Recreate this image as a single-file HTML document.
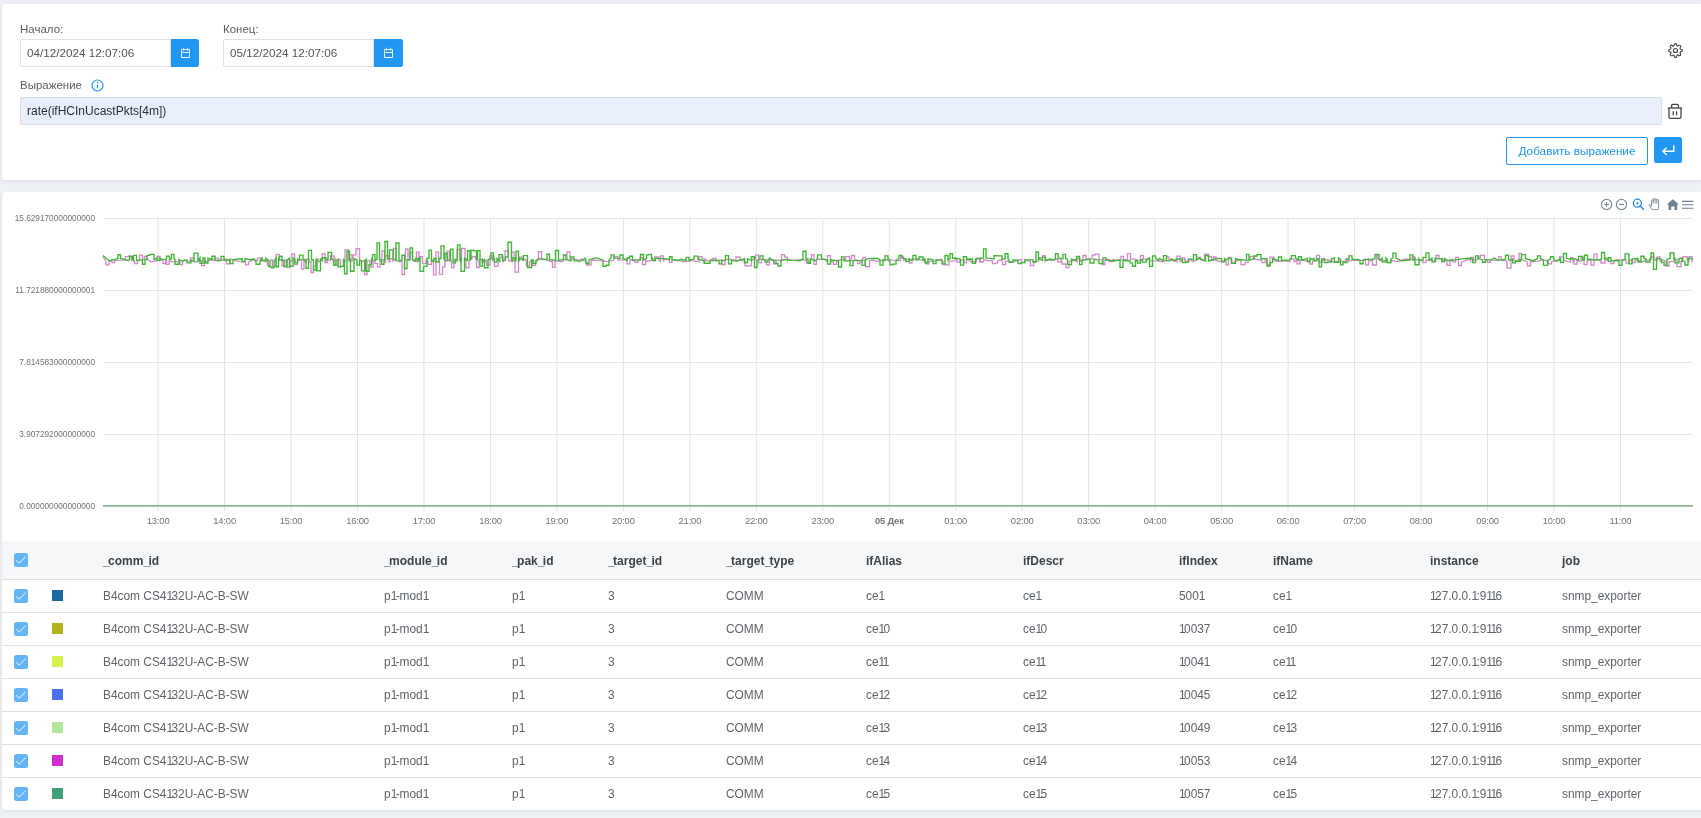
<!DOCTYPE html>
<html><head><meta charset="utf-8">
<style>
*{margin:0;padding:0;box-sizing:border-box}
html,body{width:1701px;height:818px;overflow:hidden;background:#edf0f4;font-family:"Liberation Sans",sans-serif}
.card{position:absolute;background:#fff;border-radius:3px;box-shadow:0 1px 3px rgba(40,50,70,0.10)}
.abs{position:absolute}
.lbl{position:absolute;font-size:11.5px;color:#5a6066;line-height:13px;white-space:nowrap}
.inp{position:absolute;height:28px;border:1px solid #dfe3e8;border-radius:2px 0 0 2px;background:#fff;font-size:11.7px;color:#50565c;line-height:26px;padding-left:6px;white-space:nowrap}
.cbtn{position:absolute;height:28px;width:28px;background:#2196f3;border-radius:0 2.5px 2.5px 0}
.thead{position:absolute;left:2px;top:541px;width:1699px;height:38px;background:#f6f7f9}
.rowline{position:absolute;left:2px;width:1699px;height:1px;background:#dde1e6}
.chk{position:absolute;left:14px;width:14px;height:14px;line-height:0}
.sq{position:absolute;left:52px;width:11px;height:11px}
.th{position:absolute;height:38px;line-height:40px;font-size:12px;font-weight:bold;color:#3d4349;white-space:nowrap}
.us{letter-spacing:-1.6px}
.one{letter-spacing:-1.6px}
.td{position:absolute;height:32px;line-height:32px;font-size:11.9px;color:#5e646a;white-space:nowrap}
</style></head><body>
<div style="position:absolute;left:0;top:0;width:1701px;height:818px;will-change:transform">
<div class="card" style="left:2px;top:4px;width:1699px;height:176px;border-radius:3px 0 0 3px"></div>
<div class="lbl" style="left:20px;top:23px">Начало:</div>
<div class="inp" style="left:20px;top:39px;width:151px">04/12/2024 12:07:06</div>
<div class="cbtn" style="left:171px;top:39px"><svg width="11" height="12" viewBox="0 0 11 12" style="position:absolute;left:9px;top:8px" fill="none" stroke="#fff" stroke-width="0.9"><path d="M1.5 2.5h8v8h-8z"/><path d="M1.5 5.5h8"/><path d="M3.5 0.8v3M7.5 0.8v3"/></svg></div>
<div class="lbl" style="left:223px;top:23px">Конец:</div>
<div class="inp" style="left:223px;top:39px;width:151px">05/12/2024 12:07:06</div>
<div class="cbtn" style="left:374px;top:39px;width:29px"><svg width="11" height="12" viewBox="0 0 11 12" style="position:absolute;left:9px;top:8px" fill="none" stroke="#fff" stroke-width="0.9"><path d="M1.5 2.5h8v8h-8z"/><path d="M1.5 5.5h8"/><path d="M3.5 0.8v3M7.5 0.8v3"/></svg></div>
<div class="abs" style="left:1667.9px;top:42.9px;line-height:0"><svg width="15" height="15" viewBox="0 0 24 24" fill="none" stroke="#3f454b" stroke-width="1.9" stroke-linejoin="round"><circle cx="12" cy="12" r="3.2"/><path d="M19.4 15a1.65 1.65 0 0 0 .33 1.82l.06.06a2 2 0 1 1-2.83 2.83l-.06-.06a1.65 1.65 0 0 0-1.82-.33 1.65 1.65 0 0 0-1 1.51V21a2 2 0 1 1-4 0v-.09A1.65 1.65 0 0 0 9 19.400a1.65 1.65 0 0 0-1.82.33l-.06.06a2 2 0 1 1-2.83-2.830l.06-.06A1.65 1.650 0 0 0 4.68 15a1.65 1.65 0 0 0-1.51-1H3a2 2 0 1 1 0-4h.09A1.65 1.65 0 0 0 4.6 9a1.65 1.65 0 0 0-.33-1.82l-.06-.06a2 2 0 1 1 2.83-2.83l.06.06A1.65 1.65 0 0 0 9 4.68a1.65 1.65 0 0 0 1-1.51V3a2 2 0 1 1 4 0v.09a1.65 1.65 0 0 0 1 1.51 1.65 1.65 0 0 0 1.82-.33l.06-.06a2 2 0 1 1 2.83 2.83l-.06.06A1.65 1.65 0 0 0 19.4 9a1.65 1.65 0 0 0 1.51 1H21a2 2 0 1 1 0 4h-.09a1.65 1.65 0 0 0-1.51 1z"/></svg></div>
<div class="lbl" style="left:20px;top:79px">Выражение</div>
<div class="abs" style="left:91px;top:78.5px;line-height:0"><svg width="13" height="13" viewBox="0 0 13 13"><circle cx="6.5" cy="6.5" r="5.5" fill="none" stroke="#2196f3" stroke-width="1.2"/><circle cx="6.5" cy="3.6" r="0.75" fill="#2196f3"/><path d="M6.5 5.6v3.3" stroke="#2196f3" stroke-width="1.2"/></svg></div>
<div class="abs" style="left:20px;top:97px;width:1642px;height:28px;background:#e8effb;border:1px solid #d8dde4;border-radius:2px;font-size:12px;color:#2b2f33;line-height:26px;padding-left:6px">rate(ifHCInUcastPkts[4m])</div>
<div class="abs" style="left:1667px;top:102.8px;line-height:0"><svg width="16" height="17" viewBox="0 0 16 17" fill="none" stroke="#3f454b" stroke-width="1.3" stroke-linejoin="round"><path d="M0.8 5h14.4"/><path d="M4.6 5V2.6c0-.8.5-1.3 1.3-1.3h4.2c.8 0 1.3.5 1.3 1.3V5"/><path d="M2 5v9c0 .9.6 1.4 1.4 1.4h9.2c.8 0 1.4-.5 1.4-1.4V5"/><path d="M6.3 8.3v3.9M9.6 8.3v3.9"/></svg></div>
<div class="abs" style="left:1506px;top:137px;width:142px;height:28px;border:1px solid #2196f3;border-radius:2px;color:#2196f3;font-size:11.75px;line-height:26px;text-align:center;white-space:nowrap">Добавить выражение</div>
<div class="abs" style="left:1654px;top:137px;width:28px;height:26px;background:#2196f3;border-radius:2.5px">
<div class="abs" style="left:8px;top:8px;line-height:0"><svg width="14" height="12" viewBox="0 0 14 12" fill="none" stroke="#fff" stroke-width="1.4" stroke-linejoin="miter"><path d="M11.8 0.2v6.1H1"/><path d="M4.7 2.4L0.9 6.2l3.8 3.9"/></svg></div></div>

<div class="card" style="left:2px;top:192px;width:1699px;height:618px;border-radius:4px 0 0 4px"></div>
<svg width="100" height="16" viewBox="0 0 100 16" style="position:absolute;left:1598px;top:197px">
<g fill="none" stroke="#6e8192" stroke-width="1.05">
<circle cx="8.6" cy="7.4" r="5.1"/><path d="M8.6 4.9v5M6.1 7.4h5"/>
<circle cx="23.5" cy="7.4" r="5.1"/><path d="M21 7.4h5"/>
</g>
<g fill="none" stroke="#1e88e5" stroke-width="1.2"><circle cx="39.4" cy="6.2" r="4"/><path d="M42.3 9.1l3.5 3.6" stroke-width="1.4"/><path d="M39.4 4.9v2.6M38.1 6.2h2.6" stroke-width="0.9"/></g>
<g fill="none" stroke="#6e8192" stroke-width="0.9" stroke-linejoin="round"><path d="M54.3 12.6L51.3 8.7c-.5-.7.3-1.3.9-.8L53.6 9.2V3.4c0-.9 1.6-.9 1.6 0V2.3c0-.9 1.8-.9 1.8 0v.2c0-.9 1.8-.9 1.8 0v.6c0-.8 1.8-.8 1.8 0V11.3c0 .8-.5 1.3-1.3 1.3z"/><path d="M55.2 3v3.5M57 2.5v4M58.8 2.8v3.7"/></g>
<path d="M74.8 2.2l6 5.3h-1.6v5.4h-2.7v-3.3h-3.3v3.3h-2.7v-5.4h-1.6z" fill="#6e8192"/>
<g stroke="#6e8192" stroke-width="1.1"><path d="M84 4.4h11.4M84 7.7h11.4M84 11.2h11.4"/></g>
</svg>
<svg width="1701" height="340" viewBox="0 192 1701 340" style="position:absolute;left:0;top:192px">
<line x1="103" y1="218.5" x2="1693" y2="218.5" stroke="#e3e3e3" stroke-width="1"/>
<line x1="103" y1="290.5" x2="1693" y2="290.5" stroke="#e3e3e3" stroke-width="1"/>
<line x1="103" y1="362.5" x2="1693" y2="362.5" stroke="#e3e3e3" stroke-width="1"/>
<line x1="103" y1="434.5" x2="1693" y2="434.5" stroke="#e3e3e3" stroke-width="1"/>
<line x1="158.10" y1="218" x2="158.10" y2="511" stroke="#e3e3e3" stroke-width="1"/>
<line x1="224.57" y1="218" x2="224.57" y2="511" stroke="#e3e3e3" stroke-width="1"/>
<line x1="291.04" y1="218" x2="291.04" y2="511" stroke="#e3e3e3" stroke-width="1"/>
<line x1="357.51" y1="218" x2="357.51" y2="511" stroke="#e3e3e3" stroke-width="1"/>
<line x1="423.98" y1="218" x2="423.98" y2="511" stroke="#e3e3e3" stroke-width="1"/>
<line x1="490.45" y1="218" x2="490.45" y2="511" stroke="#e3e3e3" stroke-width="1"/>
<line x1="556.92" y1="218" x2="556.92" y2="511" stroke="#e3e3e3" stroke-width="1"/>
<line x1="623.39" y1="218" x2="623.39" y2="511" stroke="#e3e3e3" stroke-width="1"/>
<line x1="689.86" y1="218" x2="689.86" y2="511" stroke="#e3e3e3" stroke-width="1"/>
<line x1="756.33" y1="218" x2="756.33" y2="511" stroke="#e3e3e3" stroke-width="1"/>
<line x1="822.80" y1="218" x2="822.80" y2="511" stroke="#e3e3e3" stroke-width="1"/>
<line x1="889.27" y1="218" x2="889.27" y2="511" stroke="#e3e3e3" stroke-width="1"/>
<line x1="955.74" y1="218" x2="955.74" y2="511" stroke="#e3e3e3" stroke-width="1"/>
<line x1="1022.21" y1="218" x2="1022.21" y2="511" stroke="#e3e3e3" stroke-width="1"/>
<line x1="1088.68" y1="218" x2="1088.68" y2="511" stroke="#e3e3e3" stroke-width="1"/>
<line x1="1155.15" y1="218" x2="1155.15" y2="511" stroke="#e3e3e3" stroke-width="1"/>
<line x1="1221.62" y1="218" x2="1221.62" y2="511" stroke="#e3e3e3" stroke-width="1"/>
<line x1="1288.09" y1="218" x2="1288.09" y2="511" stroke="#e3e3e3" stroke-width="1"/>
<line x1="1354.56" y1="218" x2="1354.56" y2="511" stroke="#e3e3e3" stroke-width="1"/>
<line x1="1421.03" y1="218" x2="1421.03" y2="511" stroke="#e3e3e3" stroke-width="1"/>
<line x1="1487.50" y1="218" x2="1487.50" y2="511" stroke="#e3e3e3" stroke-width="1"/>
<line x1="1553.97" y1="218" x2="1553.97" y2="511" stroke="#e3e3e3" stroke-width="1"/>
<line x1="1620.44" y1="218" x2="1620.44" y2="511" stroke="#e3e3e3" stroke-width="1"/>
<text x="95" y="221" text-anchor="end" font-family="Liberation Sans" font-size="8.25" fill="#6f757b">15.629170000000000</text>
<text x="95" y="293" text-anchor="end" font-family="Liberation Sans" font-size="8.25" fill="#6f757b">11.721880000000001</text>
<text x="95" y="365" text-anchor="end" font-family="Liberation Sans" font-size="8.25" fill="#6f757b">7.814583000000000</text>
<text x="95" y="437" text-anchor="end" font-family="Liberation Sans" font-size="8.25" fill="#6f757b">3.907292000000000</text>
<text x="95" y="509" text-anchor="end" font-family="Liberation Sans" font-size="8.25" fill="#6f757b">0.000000000000000</text>
<text x="158.1" y="523.5" text-anchor="middle" font-family="Liberation Sans" font-size="9.4" letter-spacing="-0.15" fill="#6f757b">13:00</text>
<text x="224.6" y="523.5" text-anchor="middle" font-family="Liberation Sans" font-size="9.4" letter-spacing="-0.15" fill="#6f757b">14:00</text>
<text x="291.0" y="523.5" text-anchor="middle" font-family="Liberation Sans" font-size="9.4" letter-spacing="-0.15" fill="#6f757b">15:00</text>
<text x="357.5" y="523.5" text-anchor="middle" font-family="Liberation Sans" font-size="9.4" letter-spacing="-0.15" fill="#6f757b">16:00</text>
<text x="424.0" y="523.5" text-anchor="middle" font-family="Liberation Sans" font-size="9.4" letter-spacing="-0.15" fill="#6f757b">17:00</text>
<text x="490.5" y="523.5" text-anchor="middle" font-family="Liberation Sans" font-size="9.4" letter-spacing="-0.15" fill="#6f757b">18:00</text>
<text x="556.9" y="523.5" text-anchor="middle" font-family="Liberation Sans" font-size="9.4" letter-spacing="-0.15" fill="#6f757b">19:00</text>
<text x="623.4" y="523.5" text-anchor="middle" font-family="Liberation Sans" font-size="9.4" letter-spacing="-0.15" fill="#6f757b">20:00</text>
<text x="689.9" y="523.5" text-anchor="middle" font-family="Liberation Sans" font-size="9.4" letter-spacing="-0.15" fill="#6f757b">21:00</text>
<text x="756.3" y="523.5" text-anchor="middle" font-family="Liberation Sans" font-size="9.4" letter-spacing="-0.15" fill="#6f757b">22:00</text>
<text x="822.8" y="523.5" text-anchor="middle" font-family="Liberation Sans" font-size="9.4" letter-spacing="-0.15" fill="#6f757b">23:00</text>
<text x="889.3" y="523.5" text-anchor="middle" font-family="Liberation Sans" font-size="9.4" letter-spacing="-0.15" font-weight="bold" fill="#6f757b">05 Дек</text>
<text x="955.7" y="523.5" text-anchor="middle" font-family="Liberation Sans" font-size="9.4" letter-spacing="-0.15" fill="#6f757b">01:00</text>
<text x="1022.2" y="523.5" text-anchor="middle" font-family="Liberation Sans" font-size="9.4" letter-spacing="-0.15" fill="#6f757b">02:00</text>
<text x="1088.7" y="523.5" text-anchor="middle" font-family="Liberation Sans" font-size="9.4" letter-spacing="-0.15" fill="#6f757b">03:00</text>
<text x="1155.1" y="523.5" text-anchor="middle" font-family="Liberation Sans" font-size="9.4" letter-spacing="-0.15" fill="#6f757b">04:00</text>
<text x="1221.6" y="523.5" text-anchor="middle" font-family="Liberation Sans" font-size="9.4" letter-spacing="-0.15" fill="#6f757b">05:00</text>
<text x="1288.1" y="523.5" text-anchor="middle" font-family="Liberation Sans" font-size="9.4" letter-spacing="-0.15" fill="#6f757b">06:00</text>
<text x="1354.6" y="523.5" text-anchor="middle" font-family="Liberation Sans" font-size="9.4" letter-spacing="-0.15" fill="#6f757b">07:00</text>
<text x="1421.0" y="523.5" text-anchor="middle" font-family="Liberation Sans" font-size="9.4" letter-spacing="-0.15" fill="#6f757b">08:00</text>
<text x="1487.5" y="523.5" text-anchor="middle" font-family="Liberation Sans" font-size="9.4" letter-spacing="-0.15" fill="#6f757b">09:00</text>
<text x="1554.0" y="523.5" text-anchor="middle" font-family="Liberation Sans" font-size="9.4" letter-spacing="-0.15" fill="#6f757b">10:00</text>
<text x="1620.4" y="523.5" text-anchor="middle" font-family="Liberation Sans" font-size="9.4" letter-spacing="-0.15" fill="#6f757b">11:00</text>
<line x1="103" y1="505.9" x2="1693" y2="505.9" stroke="#8db58d" stroke-width="1.6"/>
<path d="M103.0,256.5L106.0,261.8V264.8H109.0V261.8L112.0,260.3V262.7H114.5V260.3L120.5,260.2L125.5,260.0V256.6H128.5V255.9H131.5V260.0L134.5,261.0V263.7H137.5V261.0L139.5,259.5V255.1H142.5V259.5L144.5,259.2V256.5H147.0V259.2L151.0,261.8L157.0,260.7V256.3H160.0V260.7L163.0,260.0V263.5H165.5V260.0L166.5,260.9V264.3H169.0V260.9L172.0,261.5L180.0,261.9V264.6H182.5V261.9L184.5,259.7L190.5,261.9V257.9H193.5V261.9L201.5,260.7V265.7H204.5V260.7L206.5,261.8L211.5,259.1L214.5,260.6V258.2H218.5V260.6L226.5,259.1V263.9H229.5V259.1L232.5,259.4L236.5,260.7L239.5,261.7L245.5,262.1V264.8H248.5V262.1L253.5,259.6L255.5,261.0L257.5,260.2V257.9H261.5V260.2L264.5,259.7L265.5,261.7L267.5,260.1V265.5H270.5V260.1L272.5,260.0V266.4H276.0V254.3H279.0V260.0L282.0,259.8V265.7H284.5V259.8L287.5,260.4V267.5H290.0V260.4L292.0,261.4V253.9H294.5V264.6H297.5V261.4L300.5,259.4L301.5,259.5V269.0H304.0V259.5L305.0,262.0L306.0,262.1V259.2H309.0V262.1L311.0,261.8V272.5H313.5V266.3H316.0V261.8L318.0,259.2L319.0,262.0L322.0,259.6V253.8H325.0V262.5H327.5V259.6L329.5,260.1L330.5,260.5V255.9H334.0V260.5L335.0,259.0V265.1H338.5V259.0L340.5,259.7V266.4H344.0V259.7L345.0,260.6V249.8H348.5V260.6L349.5,261.0V254.8H352.0V261.0L353.0,260.2V254.8H356.0V248.7H359.5V260.2L362.5,261.3L364.5,260.4V274.5H367.0V260.4L370.0,260.8V267.2H373.0V260.8L375.0,260.5V263.3H377.5V267.2H380.0V260.5L381.0,261.1L382.0,261.1V250.9H384.5V261.1L385.5,262.0V255.8H389.0V262.0L390.0,261.7V258.6H392.5V261.7L393.5,259.5V248.3H396.0V259.5L399.0,261.5L402.0,261.3V274.7H404.5V261.3L405.5,260.0V249.0H408.0V260.0L410.0,259.9V252.5H412.5V259.9L414.5,261.5L415.5,259.4L416.5,260.9V252.2H419.0V260.9L420.0,259.8V256.6H422.5V263.7H426.0V259.8L428.0,261.4V264.4H431.5V261.4L433.5,259.6V274.8H436.0V251.9H438.5V259.6L439.5,260.7V274.3H442.5V266.9H445.0V260.7L447.0,261.2V251.1H449.5V261.2L451.5,260.6V267.7H454.0V260.6L455.0,259.0L457.0,261.1V249.4H460.5V261.1L461.5,260.2V248.4H465.0V260.2L466.0,260.8V267.8H469.0V260.8L472.0,259.2V256.6H475.5V259.2L476.5,259.8V267.5H479.0V259.8L482.0,259.2V261.9H484.5V259.2L485.5,261.1L486.5,260.5V265.2H490.0V255.6H492.5V260.5L494.5,261.8V266.3H498.0V261.8L500.0,261.7V257.1H503.0V261.7L505.0,260.7V251.0H508.5V260.7L511.5,261.3V252.1H514.0V261.3L515.0,261.5V272.1H518.5V261.5L519.5,260.6V257.2H522.5V260.6L525.5,259.3L526.5,261.5V265.8H529.5V261.5L531.5,261.2L532.5,261.7V265.7H535.5V261.7L538.5,259.6V251.6H541.5V259.6L544.5,259.5L552.5,261.8V267.4H555.0V261.8L556.0,260.5L562.0,261.7L565.0,259.8L567.0,258.9V251.9H570.0V258.9L578.0,259.8L579.0,261.7L581.0,258.9L587.0,261.6V265.1H591.0V261.6L592.0,260.0L600.0,260.7L608.0,261.6L614.0,260.1V256.6H618.0V260.1L621.0,259.8L626.0,259.7L627.0,259.1V263.8H630.0V259.1L633.0,260.8L635.0,259.6V262.4H638.0V259.6L640.0,260.1V257.7H642.5V264.7H645.5V260.1L646.5,261.2L654.5,259.7V256.9H658.5V259.7L660.5,261.5V255.9H663.5V261.5L664.5,259.0L669.5,259.6V262.3H672.0V259.6L680.0,260.8L683.0,261.5L689.0,261.3L691.0,260.4L699.0,261.8V256.7H702.0V258.9H705.0V261.8L706.0,260.0L709.0,261.7L712.0,259.2L713.0,261.4V258.4H716.0V261.4L719.0,259.9L722.0,260.1V264.5H725.0V260.1L728.0,259.2L731.0,259.5L736.0,260.6V257.0H740.0V260.6L745.0,260.8V265.8H747.5V265.9H751.5V260.8L753.5,258.9L755.5,259.0V254.8H758.5V262.8H761.5V259.0L766.5,259.7V264.8H769.5V259.7L773.5,260.1V263.9H776.5V260.1L781.5,260.9V254.7H784.5V257.2H787.5V260.9L788.5,259.4L791.5,260.1L794.5,260.4L800.5,259.7L806.5,260.4V262.8H809.5V260.4L811.5,259.2V254.7H814.0V264.3H816.5V259.2L824.5,259.3L827.5,261.9V255.7H830.5V261.9L833.5,261.6V264.3H836.5V261.6L837.5,260.3L845.5,259.6V256.6H849.5V259.6L851.5,260.5V255.5H854.5V260.5L856.5,260.0L857.5,260.6V263.6H860.0V260.6L863.0,260.5V257.4H865.5V266.6H869.5V260.5L873.5,260.1L876.5,261.5L877.5,261.1L885.5,260.2L887.5,258.9L892.5,260.2L900.5,260.5V257.0H903.5V260.5L909.5,259.2V263.1H912.0V259.2L918.0,258.9L926.0,261.4V263.9H929.0V261.4L932.0,261.1L935.0,261.0L940.0,259.8L941.0,259.1L943.0,261.4V264.6H946.0V264.9H949.0V261.4L954.0,260.8L957.0,259.3V262.1H960.0V259.3L963.0,260.3L964.0,260.0V262.7H966.5V260.0L969.5,259.8L970.5,261.7L976.5,261.3V258.1H979.5V261.3L980.5,259.5V262.0H983.5V259.5L987.5,260.5L992.5,260.8V263.7H995.0V263.2H997.5V260.8L1001.5,259.8L1002.5,261.2V264.6H1005.5V261.2L1013.5,261.9L1021.5,259.4V262.6H1024.5V259.4L1030.5,261.7V265.7H1033.5V261.7L1038.5,261.2V257.6H1042.5V255.6H1045.0V261.2L1046.0,259.8L1049.0,259.4L1050.0,260.6L1058.0,259.1V262.2H1061.0V259.1L1062.0,261.6V264.0H1066.0V267.6H1069.0V261.6L1075.0,260.3L1077.0,261.7V258.6H1080.0V261.7L1083.0,259.2V255.5H1086.0V259.2L1092.0,259.0V255.1H1095.0V254.1H1099.0V259.0L1102.0,259.9V264.5H1105.0V259.9L1109.0,259.2V261.6H1113.0V259.2L1116.0,260.6L1121.0,260.0V256.3H1123.5V260.0L1127.5,259.4V253.7H1130.5V259.4L1135.5,258.9L1137.5,260.3L1139.5,260.4L1140.5,259.1V255.6H1143.5V259.1L1146.5,259.8L1148.5,259.2L1150.5,260.8L1158.5,260.8L1162.5,261.7L1166.5,259.7V256.9H1169.0V259.7L1177.0,261.6V256.2H1180.0V261.6L1182.0,261.0V257.9H1184.5V261.0L1185.5,259.0V261.6H1188.5V259.0L1193.5,261.8L1196.5,259.7V257.4H1200.5V259.7L1203.5,260.5L1204.5,260.0V254.1H1208.5V256.5H1211.5V260.0L1213.5,260.4V257.0H1216.0V260.4L1221.0,261.8L1226.0,260.3V264.8H1228.5V257.5H1231.0V260.3L1232.0,260.8V263.4H1235.0V260.8L1241.0,260.0V264.6H1245.0V262.3H1248.0V260.0L1250.0,259.0V256.5H1254.0V259.0L1262.0,260.4V262.7H1265.0V260.4L1267.0,260.7V264.8H1270.0V257.2H1274.0V260.7L1278.0,261.4L1286.0,260.9L1290.0,261.7V259.1H1294.0V261.7L1295.0,261.8L1297.0,259.3V263.8H1300.0V259.3L1304.0,260.5L1310.0,261.3V264.2H1312.5V261.3L1316.5,259.8V255.3H1319.5V262.3H1322.5V259.8L1328.5,260.0L1333.5,261.9L1341.5,261.4L1345.5,261.3V258.9H1348.5V261.3L1354.5,260.1L1362.5,260.3L1365.5,259.1V264.9H1368.5V259.1L1370.5,261.1L1372.5,259.2V265.0H1376.5V254.6H1379.5V259.2L1385.5,260.8L1387.5,260.3V262.7H1390.5V260.3L1398.5,261.7L1404.5,259.2L1412.5,259.5V256.8H1415.0V259.5L1423.0,259.8V262.7H1426.0V259.8L1428.0,260.3L1436.0,261.3V255.5H1439.0V258.6H1442.0V261.3L1443.0,259.5L1447.0,261.6V265.4H1450.0V259.3H1452.5V261.6L1453.5,261.8L1455.5,262.1V257.4H1458.5V265.5H1461.5V262.1L1469.5,259.0L1470.5,260.7V257.4H1473.5V260.7L1477.5,259.6V257.4H1480.5V255.4H1484.5V259.6L1487.5,260.1V262.3H1490.5V260.1L1498.5,260.0V256.6H1501.0V260.0L1502.0,260.5L1505.0,260.4L1507.0,261.0V268.2H1511.0V256.0H1514.0V261.0L1519.0,259.5V253.4H1521.5V259.5L1526.5,261.5L1527.5,261.9V265.9H1530.5V261.9L1538.5,261.1L1540.5,260.4L1541.5,259.6L1546.5,260.6L1548.5,261.6V263.8H1551.5V261.6L1559.5,260.1V256.8H1563.5V260.1L1564.5,260.4L1567.5,261.6L1570.5,261.8V257.7H1573.0V261.8L1574.0,260.6V264.2H1577.0V260.6L1579.0,261.0L1581.0,260.9V257.6H1584.0V264.6H1587.0V260.9L1591.0,259.9V265.1H1594.0V254.2H1597.0V259.9L1598.0,259.8L1600.0,259.9L1601.0,259.5V263.0H1605.0V259.5L1609.0,261.6L1611.0,260.8V263.6H1614.0V260.8L1616.0,259.6L1620.0,259.9L1626.0,260.0V263.1H1629.0V260.0L1632.0,260.3V262.7H1635.0V260.3L1643.0,261.7L1644.0,260.9L1646.0,260.3L1651.0,259.4V257.1H1654.0V259.4L1657.0,261.0V257.0H1660.0V261.0L1664.0,260.3L1666.0,261.9V266.1H1669.0V261.9L1674.0,261.5V259.2H1677.0V266.7H1681.0V261.5L1683.0,259.5V256.7H1687.0V259.5L1689.0,260.9V256.6H1692.0V260.9L1693.0,259.2" fill="none" stroke="#d08ac6" stroke-width="1.3"/>
<path d="M103.0,255.5L109.0,260.7L115.0,259.3L118.0,258.5V254.7H120.5V258.5L128.5,260.5L129.5,259.8V256.6H132.5V259.8L133.5,260.6V255.3H136.5V260.6L142.5,259.8V264.2H145.0V259.8L147.0,259.4V255.3H150.0V254.3H154.0V259.4L157.0,258.0V260.4H159.5V258.0L160.5,258.6L161.5,259.4L166.5,259.2V256.3H169.5V259.2L171.5,258.9V254.4H174.0V258.9L175.0,259.4V264.2H179.0V259.4L182.0,261.1L187.0,260.0V262.9H191.0V260.0L194.0,261.1V253.1H198.0V261.1L200.0,258.0V263.4H203.0V258.0L205.0,258.1V263.0H208.0V258.1L212.0,259.9V256.3H215.0V259.9L218.0,260.8L221.0,260.2V256.4H224.0V260.2L230.0,259.8V263.6H233.0V259.8L236.0,259.2L242.0,258.8V261.4H245.0V258.8L251.0,259.7L253.0,258.8L256.0,260.3V264.2H260.0V260.3L262.0,258.2V260.9H266.0V258.2L269.0,260.9V266.9H271.5V267.9H274.0V260.9L276.0,258.1V266.7H278.5V258.1L279.5,260.4V256.3H282.0V260.4L284.0,260.9V266.7H286.5V260.9L289.5,258.1V266.2H293.0V258.1L295.0,259.1V262.9H297.5V259.1L299.5,259.8V255.1H303.0V259.8L306.0,260.0V268.2H308.5V250.3H311.5V260.0L313.5,259.5V270.1H316.0V259.5L317.0,259.1V270.8H320.5V259.1L322.5,260.6V257.7H326.0V260.6L328.0,258.8V252.4H331.5V258.8L333.5,260.2V265.1H336.0V260.2L338.0,259.7V266.9H340.5V266.3H343.5V259.7L344.5,260.4V273.7H347.0V251.1H349.5V260.4L350.5,258.5V271.2H354.0V258.5L357.0,260.2V265.1H359.5V260.2L361.5,260.6V270.8H365.0V260.6L366.0,259.3V271.2H369.0V264.7H371.5V259.3L372.5,260.2V254.6H375.0V260.2L377.0,259.6V242.8H379.5V259.6L381.5,259.5V264.2H384.0V259.5L385.0,259.3V241.5H387.5V259.3L389.5,258.4V249.9H393.0V258.4L396.0,260.9V243.0H399.0V260.9L402.0,259.9V255.2H404.5V268.5H407.0V259.9L410.0,259.6V247.8H412.5V259.6L415.5,261.0V258.6H418.0V261.0L420.0,258.2V271.4H423.5V266.4H427.0V258.2L429.0,258.3V250.1H431.5V261.4H434.0V258.3L436.0,258.3V262.0H439.0V258.3L441.0,258.7V245.9H444.0V258.7L445.0,260.1V253.5H447.5V260.1L450.5,259.9V249.1H453.0V262.9H455.5V259.9L457.5,259.8V244.9H460.0V259.8L461.0,258.3V271.4H464.5V258.3L467.5,260.4V250.7H470.0V260.4L471.0,258.5V250.1H474.0V250.8H476.5V258.5L477.5,259.4V250.6H480.0V266.1H482.5V259.4L483.5,260.6L484.5,259.8V267.7H488.0V259.8L491.0,259.0V252.9H493.5V259.0L494.5,258.5V262.1H497.0V258.5L499.0,260.8V254.6H502.5V260.8L505.5,259.8V256.8H508.0V242.2H511.5V259.8L512.5,260.8V257.9H515.0V260.8L516.0,260.5V251.1H518.5V260.5L519.5,258.8L521.5,259.0L523.5,259.6V255.6H527.5V267.5H531.5V259.6L533.5,260.3V263.6H536.0V260.3L539.0,258.7L547.0,259.6V254.2H549.5V259.6L555.5,260.5V250.5H558.5V260.5L563.5,259.4V255.0H566.0V259.4L571.0,260.9V256.8H574.0V260.9L582.0,260.9L585.0,258.0L586.0,259.9V263.7H589.0V259.9L594.0,258.1L598.0,258.1L603.0,260.2V266.3H606.0V265.2H609.0V260.2L611.0,258.1V254.9H614.0V258.1L620.0,258.3V255.0H623.0V258.3L627.0,260.4V258.0H629.5V256.3H632.5V260.4L640.5,259.9V254.5H643.5V259.9L646.5,258.5V254.9H649.0V254.3H651.5V258.5L652.5,258.2V260.5H655.5V258.2L663.5,258.7L669.5,259.4V256.7H672.0V259.4L678.0,260.5L681.0,259.3L686.0,260.5V257.4H689.0V260.5L692.0,259.7L694.0,259.3V256.1H698.0V259.3L704.0,260.5V263.2H707.0V263.3H710.0V260.5L716.0,260.2L719.0,260.7V263.8H721.5V260.7L725.5,260.2V255.6H728.5V263.8H731.5V260.2L736.5,261.0L744.5,258.7V262.9H747.5V258.7L751.5,260.5V256.7H754.5V267.5H757.0V260.5L760.0,259.6V255.9H763.0V259.6L765.0,259.8V262.1H768.0V259.8L770.0,258.0L772.0,260.3L775.0,260.2V263.6H778.0V266.0H781.0V260.2L787.0,259.5L789.0,260.2L794.0,260.3L798.0,260.6L800.0,260.7L801.0,259.6L803.0,259.2V251.2H806.0V259.2L808.0,258.9V263.3H810.5V258.9L813.5,260.0L815.5,260.8L816.5,259.8L817.5,258.9V254.8H821.5V258.9L827.5,259.8V264.1H830.5V259.8L838.5,260.9V267.0H841.5V256.9H844.0V260.9L850.0,260.7V265.6H853.0V260.7L861.0,260.4L862.0,260.0V265.4H865.0V260.0L867.0,259.2L869.0,258.7L877.0,258.3L880.0,259.6V265.1H883.0V259.6L885.0,260.5V255.9H888.0V260.5L890.0,261.0V264.9H893.0V264.1H896.0V261.0L899.0,258.0V255.3H902.0V258.0L906.0,258.9V261.6H909.0V258.9L911.0,260.0L913.0,260.0V255.4H916.0V260.0L919.0,259.7V257.0H923.0V259.7L925.0,258.8V262.7H928.0V258.8L933.0,259.7V263.6H936.0V259.7L942.0,260.2V263.8H945.0V255.5H948.0V260.2L950.0,258.5V253.6H952.5V258.5L955.5,258.0L960.5,259.2V265.1H963.5V256.7H966.5V259.2L972.5,259.0V263.4H975.5V259.0L983.5,258.0V248.8H986.0V258.0L994.0,259.1V255.7H998.0V255.9H1002.0V259.1L1005.0,259.0V253.7H1008.0V259.0L1009.0,259.9V262.4H1013.0V259.9L1018.0,260.1V263.6H1021.0V262.6H1025.0V260.1L1033.0,259.6V262.0H1036.0V251.9H1038.5V259.6L1039.5,258.8L1042.5,260.3V257.1H1045.5V260.3L1047.5,260.4L1049.5,258.9L1054.5,259.9L1055.5,258.4V253.6H1058.0V258.4L1063.0,258.5V254.4H1065.5V258.5L1067.5,259.2V264.6H1071.5V259.2L1076.5,260.3V256.5H1079.5V264.6H1082.0V260.3L1090.0,259.0V263.0H1094.0V259.0L1099.0,260.2V263.6H1103.0V257.9H1106.0V260.2L1114.0,260.7L1120.0,260.1V267.3H1123.0V260.1L1126.0,260.7L1130.0,260.7V262.9H1132.5V266.2H1135.5V260.7L1137.5,260.7V263.0H1140.5V260.7L1142.5,259.3V262.1H1146.5V259.3L1149.5,258.0V266.3H1152.5V255.8H1155.5V258.0L1158.5,260.6L1159.5,258.5L1163.5,260.8V255.6H1166.5V260.8L1169.5,260.9L1171.5,258.9L1174.5,260.7L1176.5,259.0L1182.5,259.2V262.6H1185.5V262.0H1188.5V259.2L1191.5,259.1L1193.5,259.8V254.6H1196.5V259.8L1199.5,258.3L1205.5,261.0V255.5H1208.5V261.0L1216.5,258.7L1218.5,258.4L1221.5,258.7V261.9H1224.5V258.7L1225.5,259.9L1230.5,257.9L1231.5,258.5V263.2H1235.5V258.5L1238.5,259.5L1246.5,260.3V254.3H1249.0V260.3L1254.0,258.7V256.0H1257.0V254.6H1261.0V258.7L1267.0,258.7V266.0H1270.0V262.6H1272.5V258.7L1278.5,260.5V257.0H1281.5V260.5L1289.5,259.8L1291.5,258.1V255.6H1295.5V258.1L1298.5,260.3V256.7H1301.5V260.3L1307.5,258.1V261.7H1310.0V258.1L1312.0,259.5L1314.0,258.4V260.9H1317.0V258.4L1319.0,259.2V266.8H1321.5V259.2L1324.5,258.8V262.6H1327.5V262.0H1331.5V258.8L1334.5,258.0V262.4H1338.5V258.0L1340.5,259.4V264.9H1343.0V262.5H1347.0V259.4L1349.0,259.4V255.9H1352.0V259.4L1358.0,259.5L1360.0,260.7V263.7H1363.0V260.7L1364.0,259.6L1372.0,259.2L1375.0,258.8V254.3H1378.0V258.8L1380.0,260.4L1382.0,258.0V261.9H1386.0V258.0L1387.0,258.9V262.6H1391.0V258.9L1393.0,258.0V253.1H1396.0V258.0L1400.0,260.2L1402.0,260.7L1410.0,260.2V254.9H1413.0V260.2L1415.0,258.8V264.7H1419.0V258.8L1420.0,260.5L1423.0,260.0V257.3H1426.0V252.8H1429.0V260.0L1432.0,258.2V261.8H1435.0V258.2L1439.0,258.8L1442.0,258.4V261.6H1444.5V258.4L1448.5,260.8L1454.5,259.8L1462.5,258.9L1467.5,258.3L1472.5,258.8V262.6H1475.5V255.9H1478.5V258.8L1482.5,259.7V262.2H1485.5V259.7L1490.5,259.9L1494.5,258.0L1497.5,260.4L1505.5,259.2V255.2H1508.5V259.2L1509.5,260.5L1512.5,258.9V262.8H1515.5V261.2H1519.5V258.9L1520.5,260.9L1521.5,258.7V254.6H1525.5V258.7L1533.5,260.7L1537.5,258.7V255.9H1540.5V258.7L1543.5,260.5V265.3H1547.5V260.5L1550.5,259.1V256.7H1553.5V259.1L1555.5,260.8L1557.5,261.1L1560.5,258.3V262.4H1563.5V253.5H1566.5V258.3L1569.5,259.2L1574.5,258.7L1578.5,260.2V256.4H1582.5V260.2L1584.5,259.7V255.2H1587.5V259.7L1590.5,259.1L1593.5,260.0L1599.5,259.8L1601.5,258.8V252.5H1604.5V258.8L1606.5,258.1L1608.5,260.7V257.6H1611.0V260.7L1619.0,260.6V265.3H1622.0V260.6L1625.0,259.2V253.9H1629.0V263.9H1632.0V259.2L1638.0,258.5V262.0H1641.0V256.2H1644.0V258.5L1646.0,258.8V262.0H1650.0V258.8L1651.0,258.4V253.0H1653.5V269.4H1656.5V258.4L1661.5,259.4V262.6H1664.0V265.3H1667.0V259.4L1670.0,258.5V253.0H1674.0V258.5L1675.0,258.5V262.8H1679.0V258.5L1682.0,258.1V261.4H1685.0V265.0H1688.0V258.1L1693.0,258.9" fill="none" stroke="#3fb536" stroke-width="1.35"/>
</svg>
<div class="thead"></div>
<div class="chk" style="top:553px"><svg width="14" height="14" viewBox="0 0 14 14"><rect width="14" height="14" rx="2.5" fill="#64b4f6"/><path d="M2.2 7.3 L5.3 10.2 L11.6 3.6" fill="none" stroke="#fff" stroke-width="0.9"/></svg></div>
<div class="th" style="left:103px;top:541px"><span class="us">_</span>comm<span class="us">_</span>id</div>
<div class="th" style="left:384px;top:541px"><span class="us">_</span>module<span class="us">_</span>id</div>
<div class="th" style="left:512px;top:541px"><span class="us">_</span>pak<span class="us">_</span>id</div>
<div class="th" style="left:608px;top:541px"><span class="us">_</span>target<span class="us">_</span>id</div>
<div class="th" style="left:726px;top:541px"><span class="us">_</span>target<span class="us">_</span>type</div>
<div class="th" style="left:866px;top:541px">ifAlias</div>
<div class="th" style="left:1023px;top:541px">ifDescr</div>
<div class="th" style="left:1179px;top:541px">ifIndex</div>
<div class="th" style="left:1273px;top:541px">ifName</div>
<div class="th" style="left:1430px;top:541px">instance</div>
<div class="th" style="left:1562px;top:541px">job</div>
<div class="rowline" style="top:579px"></div>
<div class="chk" style="top:589px"><svg width="14" height="14" viewBox="0 0 14 14"><rect width="14" height="14" rx="2.5" fill="#64b4f6"/><path d="M2.2 7.3 L5.3 10.2 L11.6 3.6" fill="none" stroke="#fff" stroke-width="0.9"/></svg></div>
<div class="sq" style="top:590px;background:#1a6aa0"></div>
<div class="td" style="left:103px;top:580px">B4com CS4<span class="one">1</span>32U-AC-B-SW</div>
<div class="td" style="left:384px;top:580px">p<span class="one">1</span>-mod<span class="one">1</span></div>
<div class="td" style="left:512px;top:580px">p<span class="one">1</span></div>
<div class="td" style="left:608px;top:580px">3</div>
<div class="td" style="left:726px;top:580px">COMM</div>
<div class="td" style="left:866px;top:580px">ce<span class="one">1</span></div>
<div class="td" style="left:1023px;top:580px">ce<span class="one">1</span></div>
<div class="td" style="left:1179px;top:580px">500<span class="one">1</span></div>
<div class="td" style="left:1273px;top:580px">ce<span class="one">1</span></div>
<div class="td" style="left:1430px;top:580px"><span class="one">1</span>27.0.0.<span class="one">1</span>:9<span class="one">1</span><span class="one">1</span>6</div>
<div class="td" style="left:1562px;top:580px">snmp_exporter</div>
<div class="rowline" style="top:612px"></div>
<div class="chk" style="top:622px"><svg width="14" height="14" viewBox="0 0 14 14"><rect width="14" height="14" rx="2.5" fill="#64b4f6"/><path d="M2.2 7.3 L5.3 10.2 L11.6 3.6" fill="none" stroke="#fff" stroke-width="0.9"/></svg></div>
<div class="sq" style="top:623px;background:#b3b31f"></div>
<div class="td" style="left:103px;top:613px">B4com CS4<span class="one">1</span>32U-AC-B-SW</div>
<div class="td" style="left:384px;top:613px">p<span class="one">1</span>-mod<span class="one">1</span></div>
<div class="td" style="left:512px;top:613px">p<span class="one">1</span></div>
<div class="td" style="left:608px;top:613px">3</div>
<div class="td" style="left:726px;top:613px">COMM</div>
<div class="td" style="left:866px;top:613px">ce<span class="one">1</span>0</div>
<div class="td" style="left:1023px;top:613px">ce<span class="one">1</span>0</div>
<div class="td" style="left:1179px;top:613px"><span class="one">1</span>0037</div>
<div class="td" style="left:1273px;top:613px">ce<span class="one">1</span>0</div>
<div class="td" style="left:1430px;top:613px"><span class="one">1</span>27.0.0.<span class="one">1</span>:9<span class="one">1</span><span class="one">1</span>6</div>
<div class="td" style="left:1562px;top:613px">snmp_exporter</div>
<div class="rowline" style="top:645px"></div>
<div class="chk" style="top:655px"><svg width="14" height="14" viewBox="0 0 14 14"><rect width="14" height="14" rx="2.5" fill="#64b4f6"/><path d="M2.2 7.3 L5.3 10.2 L11.6 3.6" fill="none" stroke="#fff" stroke-width="0.9"/></svg></div>
<div class="sq" style="top:656px;background:#d7f04f"></div>
<div class="td" style="left:103px;top:646px">B4com CS4<span class="one">1</span>32U-AC-B-SW</div>
<div class="td" style="left:384px;top:646px">p<span class="one">1</span>-mod<span class="one">1</span></div>
<div class="td" style="left:512px;top:646px">p<span class="one">1</span></div>
<div class="td" style="left:608px;top:646px">3</div>
<div class="td" style="left:726px;top:646px">COMM</div>
<div class="td" style="left:866px;top:646px">ce<span class="one">1</span><span class="one">1</span></div>
<div class="td" style="left:1023px;top:646px">ce<span class="one">1</span><span class="one">1</span></div>
<div class="td" style="left:1179px;top:646px"><span class="one">1</span>004<span class="one">1</span></div>
<div class="td" style="left:1273px;top:646px">ce<span class="one">1</span><span class="one">1</span></div>
<div class="td" style="left:1430px;top:646px"><span class="one">1</span>27.0.0.<span class="one">1</span>:9<span class="one">1</span><span class="one">1</span>6</div>
<div class="td" style="left:1562px;top:646px">snmp_exporter</div>
<div class="rowline" style="top:678px"></div>
<div class="chk" style="top:688px"><svg width="14" height="14" viewBox="0 0 14 14"><rect width="14" height="14" rx="2.5" fill="#64b4f6"/><path d="M2.2 7.3 L5.3 10.2 L11.6 3.6" fill="none" stroke="#fff" stroke-width="0.9"/></svg></div>
<div class="sq" style="top:689px;background:#4a6ff0"></div>
<div class="td" style="left:103px;top:679px">B4com CS4<span class="one">1</span>32U-AC-B-SW</div>
<div class="td" style="left:384px;top:679px">p<span class="one">1</span>-mod<span class="one">1</span></div>
<div class="td" style="left:512px;top:679px">p<span class="one">1</span></div>
<div class="td" style="left:608px;top:679px">3</div>
<div class="td" style="left:726px;top:679px">COMM</div>
<div class="td" style="left:866px;top:679px">ce<span class="one">1</span>2</div>
<div class="td" style="left:1023px;top:679px">ce<span class="one">1</span>2</div>
<div class="td" style="left:1179px;top:679px"><span class="one">1</span>0045</div>
<div class="td" style="left:1273px;top:679px">ce<span class="one">1</span>2</div>
<div class="td" style="left:1430px;top:679px"><span class="one">1</span>27.0.0.<span class="one">1</span>:9<span class="one">1</span><span class="one">1</span>6</div>
<div class="td" style="left:1562px;top:679px">snmp_exporter</div>
<div class="rowline" style="top:711px"></div>
<div class="chk" style="top:721px"><svg width="14" height="14" viewBox="0 0 14 14"><rect width="14" height="14" rx="2.5" fill="#64b4f6"/><path d="M2.2 7.3 L5.3 10.2 L11.6 3.6" fill="none" stroke="#fff" stroke-width="0.9"/></svg></div>
<div class="sq" style="top:722px;background:#b5e6a0"></div>
<div class="td" style="left:103px;top:712px">B4com CS4<span class="one">1</span>32U-AC-B-SW</div>
<div class="td" style="left:384px;top:712px">p<span class="one">1</span>-mod<span class="one">1</span></div>
<div class="td" style="left:512px;top:712px">p<span class="one">1</span></div>
<div class="td" style="left:608px;top:712px">3</div>
<div class="td" style="left:726px;top:712px">COMM</div>
<div class="td" style="left:866px;top:712px">ce<span class="one">1</span>3</div>
<div class="td" style="left:1023px;top:712px">ce<span class="one">1</span>3</div>
<div class="td" style="left:1179px;top:712px"><span class="one">1</span>0049</div>
<div class="td" style="left:1273px;top:712px">ce<span class="one">1</span>3</div>
<div class="td" style="left:1430px;top:712px"><span class="one">1</span>27.0.0.<span class="one">1</span>:9<span class="one">1</span><span class="one">1</span>6</div>
<div class="td" style="left:1562px;top:712px">snmp_exporter</div>
<div class="rowline" style="top:744px"></div>
<div class="chk" style="top:754px"><svg width="14" height="14" viewBox="0 0 14 14"><rect width="14" height="14" rx="2.5" fill="#64b4f6"/><path d="M2.2 7.3 L5.3 10.2 L11.6 3.6" fill="none" stroke="#fff" stroke-width="0.9"/></svg></div>
<div class="sq" style="top:755px;background:#d22ccc"></div>
<div class="td" style="left:103px;top:745px">B4com CS4<span class="one">1</span>32U-AC-B-SW</div>
<div class="td" style="left:384px;top:745px">p<span class="one">1</span>-mod<span class="one">1</span></div>
<div class="td" style="left:512px;top:745px">p<span class="one">1</span></div>
<div class="td" style="left:608px;top:745px">3</div>
<div class="td" style="left:726px;top:745px">COMM</div>
<div class="td" style="left:866px;top:745px">ce<span class="one">1</span>4</div>
<div class="td" style="left:1023px;top:745px">ce<span class="one">1</span>4</div>
<div class="td" style="left:1179px;top:745px"><span class="one">1</span>0053</div>
<div class="td" style="left:1273px;top:745px">ce<span class="one">1</span>4</div>
<div class="td" style="left:1430px;top:745px"><span class="one">1</span>27.0.0.<span class="one">1</span>:9<span class="one">1</span><span class="one">1</span>6</div>
<div class="td" style="left:1562px;top:745px">snmp_exporter</div>
<div class="rowline" style="top:777px"></div>
<div class="chk" style="top:787px"><svg width="14" height="14" viewBox="0 0 14 14"><rect width="14" height="14" rx="2.5" fill="#64b4f6"/><path d="M2.2 7.3 L5.3 10.2 L11.6 3.6" fill="none" stroke="#fff" stroke-width="0.9"/></svg></div>
<div class="sq" style="top:788px;background:#40a07a"></div>
<div class="td" style="left:103px;top:778px">B4com CS4<span class="one">1</span>32U-AC-B-SW</div>
<div class="td" style="left:384px;top:778px">p<span class="one">1</span>-mod<span class="one">1</span></div>
<div class="td" style="left:512px;top:778px">p<span class="one">1</span></div>
<div class="td" style="left:608px;top:778px">3</div>
<div class="td" style="left:726px;top:778px">COMM</div>
<div class="td" style="left:866px;top:778px">ce<span class="one">1</span>5</div>
<div class="td" style="left:1023px;top:778px">ce<span class="one">1</span>5</div>
<div class="td" style="left:1179px;top:778px"><span class="one">1</span>0057</div>
<div class="td" style="left:1273px;top:778px">ce<span class="one">1</span>5</div>
<div class="td" style="left:1430px;top:778px"><span class="one">1</span>27.0.0.<span class="one">1</span>:9<span class="one">1</span><span class="one">1</span>6</div>
<div class="td" style="left:1562px;top:778px">snmp_exporter</div>
</div>
</body></html>
